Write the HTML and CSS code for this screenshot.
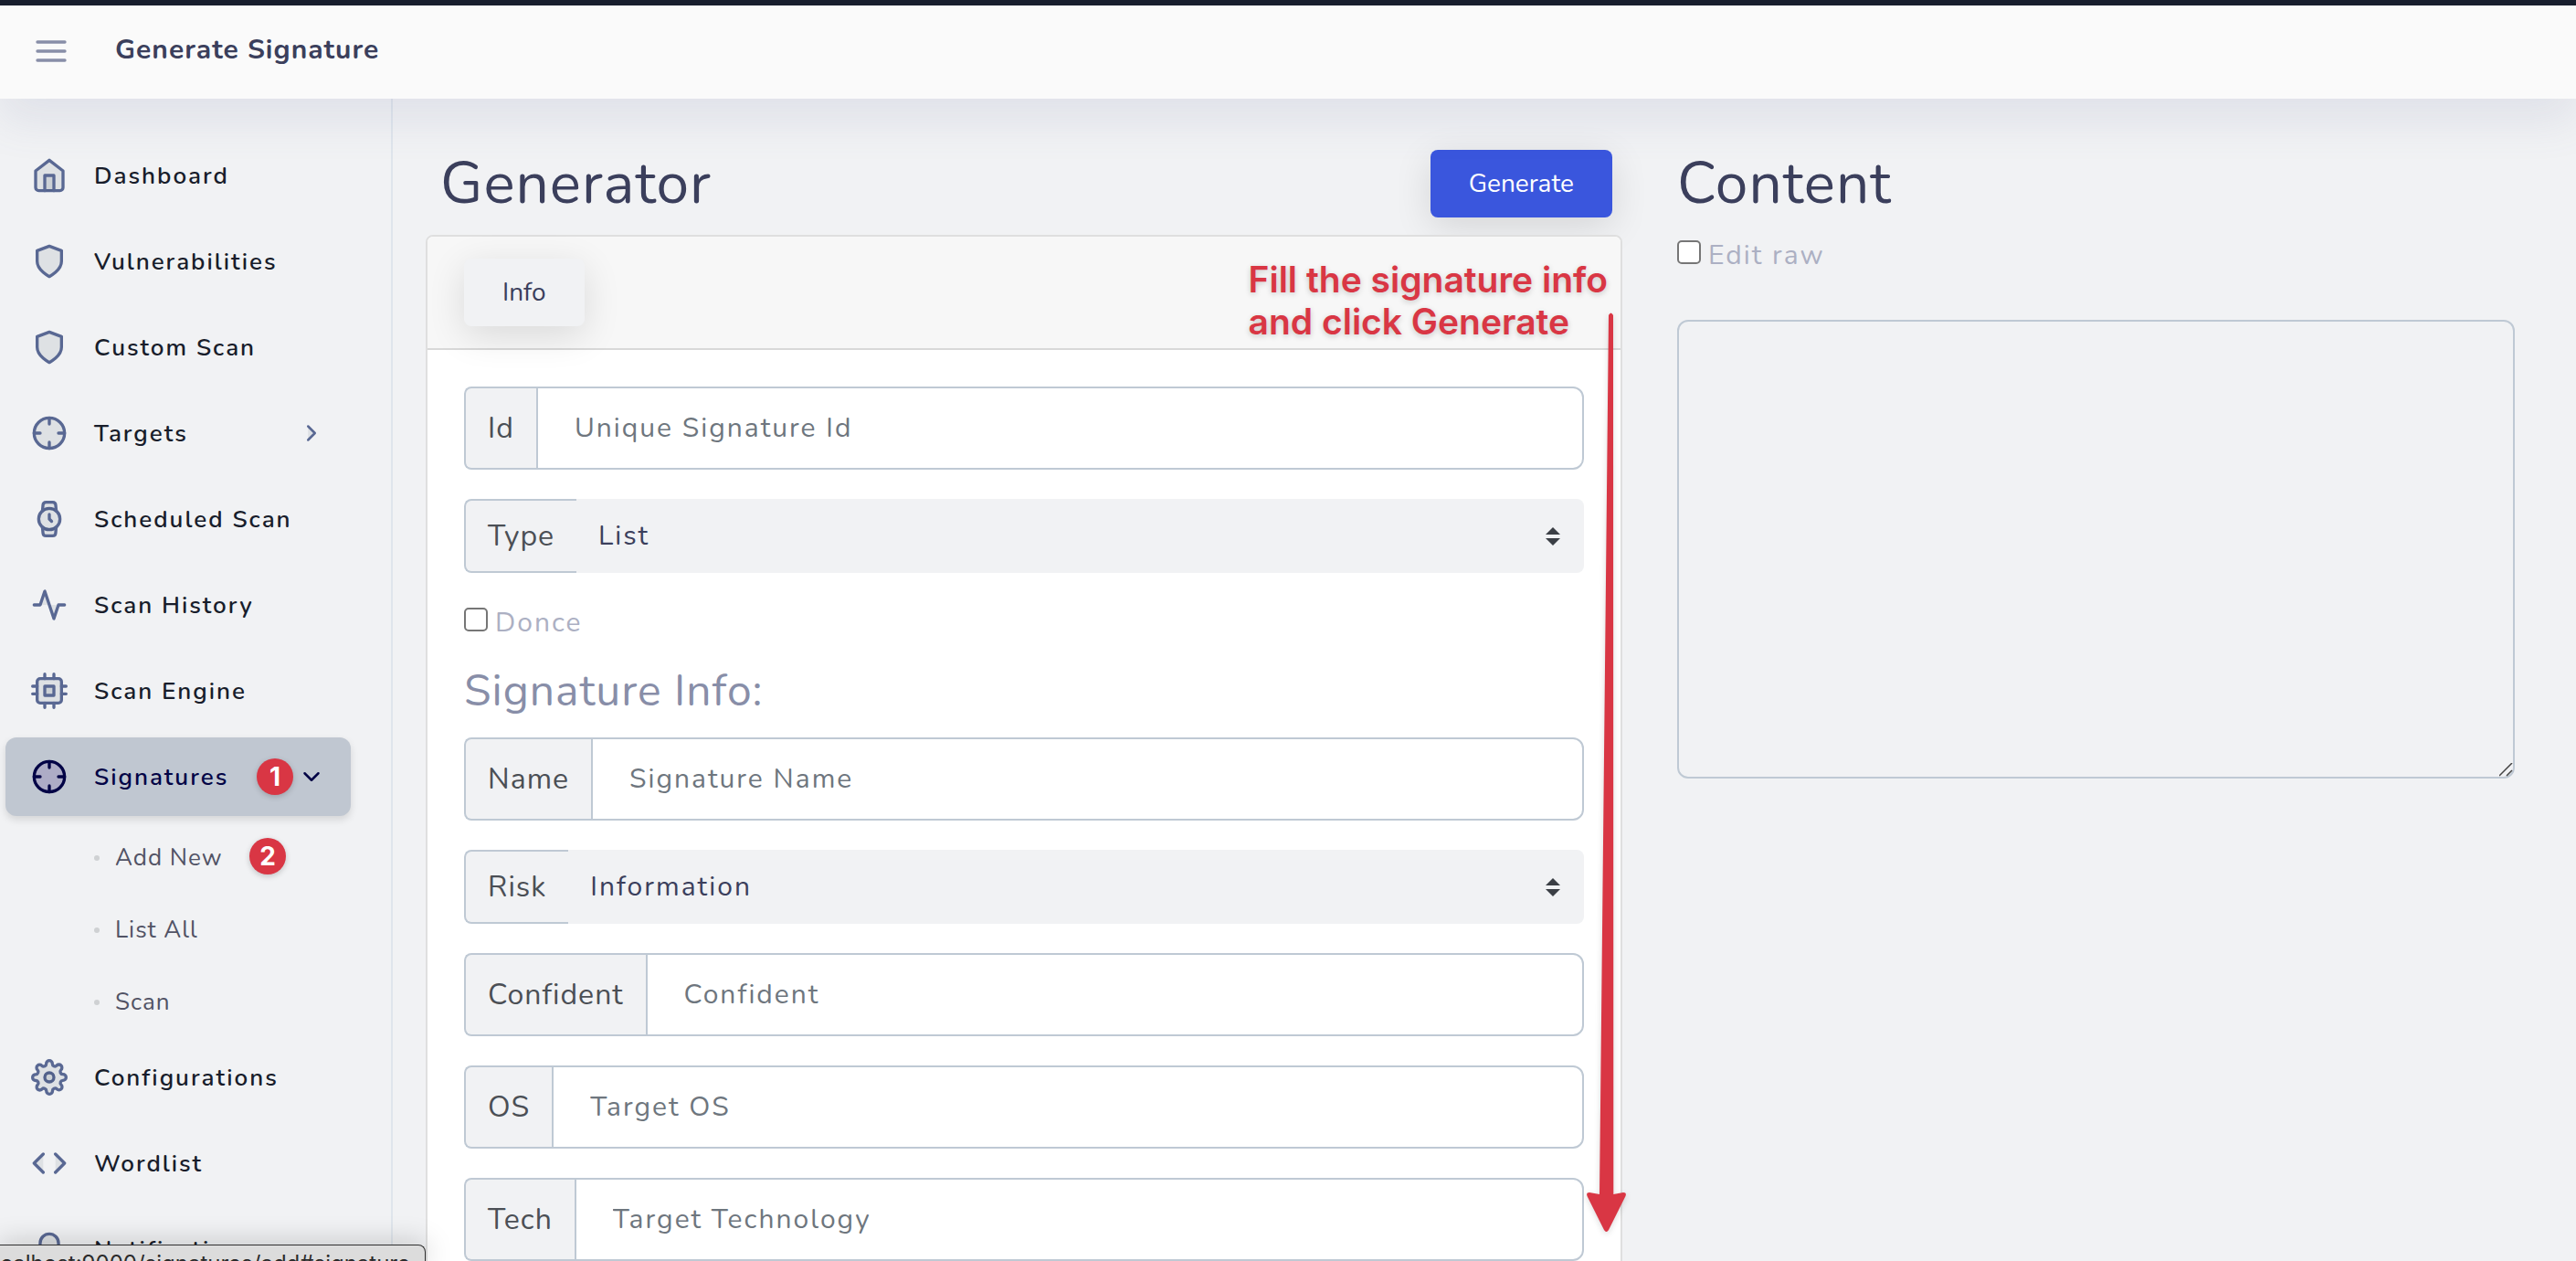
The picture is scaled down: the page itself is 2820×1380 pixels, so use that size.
FILE: index.html
```html
<!DOCTYPE html>
<html lang="en">
<head>
<meta charset="utf-8">
<title>Generate Signature</title>
<link rel="stylesheet" href="styles.css">
</head>
<body>
<svg class="sprite" aria-hidden="true">
  <symbol id="i-home" viewBox="0 0 24 24"><path d="M3 9l9-7 9 7v11a2 2 0 0 1-2 2H5a2 2 0 0 1-2-2z"/><polyline points="9 22 9 12 15 12 15 22"/></symbol>
  <symbol id="i-shield" viewBox="0 0 24 24"><path d="M12 22s8-4 8-10V5l-8-3-8 3v7c0 6 8 10 8 10z"/></symbol>
  <symbol id="i-crosshair" viewBox="0 0 24 24"><circle cx="12" cy="12" r="10"/><path d="M22 12h-4M6 12H2M12 6V2M12 22v-4"/></symbol>
  <symbol id="i-watch" viewBox="0 0 24 24"><circle cx="12" cy="12" r="7"/><polyline points="12 9 12 12 13.500 13.500"/><path d="M16.510 17.350l-.350 3.830a2 2 0 0 1-2 1.820H9.830a2 2 0 0 1-2-1.820l-.350-3.830m.010-10.700l.350-3.830A2 2 0 0 1 9.830 1h4.350a2 2 0 0 1 2 1.820l.350 3.830"/></symbol>
  <symbol id="i-activity" viewBox="0 0 24 24"><polyline points="22 12 18 12 15 21 9 3 6 12 2 12"/></symbol>
  <symbol id="i-cpu" viewBox="0 0 24 24"><rect x="4" y="4" width="16" height="16" rx="2"/><rect x="9" y="9" width="6" height="6"/><path d="M9 1v3M15 1v3M9 20v3M15 20v3M20 9h3M20 14h3M1 9h3M1 14h3"/></symbol>
  <symbol id="i-settings" viewBox="0 0 24 24"><circle cx="12" cy="12" r="3"/><path d="M19.400 15a1.650 1.650 0 0 0 .330 1.820l.060.060a2 2 0 0 1 0 2.830 2 2 0 0 1-2.830 0l-.060-.060a1.650 1.650 0 0 0-1.820-.330 1.650 1.650 0 0 0-1 1.510V21a2 2 0 0 1-2 2 2 2 0 0 1-2-2v-.090A1.650 1.650 0 0 0 9 19.400a1.650 1.650 0 0 0-1.820.330l-.060.060a2 2 0 0 1-2.830 0 2 2 0 0 1 0-2.830l.060-.060a1.650 1.650 0 0 0 .330-1.820 1.650 1.650 0 0 0-1.510-1H3a2 2 0 0 1-2-2 2 2 0 0 1 2-2h.090A1.650 1.650 0 0 0 4.600 9a1.650 1.650 0 0 0-.330-1.820l-.060-.060a2 2 0 0 1 0-2.830 2 2 0 0 1 2.830 0l.060.060a1.650 1.650 0 0 0 1.820.330H9a1.650 1.650 0 0 0 1-1.510V3a2 2 0 0 1 2-2 2 2 0 0 1 2 2v.090a1.650 1.650 0 0 0 1 1.510 1.650 1.650 0 0 0 1.820-.330l.060-.060a2 2 0 0 1 2.830 0 2 2 0 0 1 0 2.830l-.060.060a1.650 1.650 0 0 0-.330 1.820V9a1.650 1.650 0 0 0 1.510 1H21a2 2 0 0 1 2 2 2 2 0 0 1-2 2h-.090a1.650 1.650 0 0 0-1.510 1z"/></symbol>
  <symbol id="i-code" viewBox="0 0 24 24"><polyline points="16 18 22 12 16 6"/><polyline points="8 6 2 12 8 18"/></symbol>
  <symbol id="i-bell" viewBox="0 0 24 24"><path d="M18 8A6 6 0 0 0 6 8c0 7-3 9-3 9h18s-3-2-3-9"/><path d="M13.730 21a2 2 0 0 1-3.460 0"/></symbol>
  <symbol id="i-right" viewBox="0 0 24 24"><polyline points="9 18 15 12 9 6"/></symbol>
  <symbol id="i-down" viewBox="0 0 24 24"><polyline points="6 9 12 15 18 9"/></symbol>
  <symbol id="i-menu" viewBox="0 0 24 24"><path d="M3 12h18M3 6h18M3 18h18"/></symbol>
</svg>
<div class="page">
  <header class="topbar">
    <button class="menu-toggle" type="button" aria-label="Toggle menu"><svg class="icon"><use href="#i-menu"/></svg></button>
    <h3 class="topbar-title">Generate Signature</h3>
  </header>
  <div class="layout">
    <nav class="sidebar">
      <ul class="menu">
        <li><a class="menu-link" href="#dashboard"><svg class="icon"><use href="#i-home"/></svg><span>Dashboard</span></a></li>
        <li><a class="menu-link" href="#vulnerabilities"><svg class="icon"><use href="#i-shield"/></svg><span>Vulnerabilities</span></a></li>
        <li><a class="menu-link" href="#custom"><svg class="icon"><use href="#i-shield"/></svg><span>Custom Scan</span></a></li>
        <li><a class="menu-link" href="#targets"><svg class="icon"><use href="#i-crosshair"/></svg><span>Targets</span><svg class="icon chevron"><use href="#i-right"/></svg></a></li>
        <li><a class="menu-link" href="#scheduled"><svg class="icon"><use href="#i-watch"/></svg><span>Scheduled Scan</span></a></li>
        <li><a class="menu-link" href="#history"><svg class="icon"><use href="#i-activity"/></svg><span>Scan History</span></a></li>
        <li><a class="menu-link" href="#engine"><svg class="icon"><use href="#i-cpu"/></svg><span>Scan Engine</span></a></li>
        <li class="menu-group">
          <a class="menu-link active" href="#signatures"><svg class="icon"><use href="#i-crosshair"/></svg><span>Signatures</span><svg class="icon chevron"><use href="#i-down"/></svg></a>
          <b class="step step-one">1</b>
          <ul class="submenu">
            <li><a href="#signature-add">Add New</a><b class="step step-two">2</b></li>
            <li><a href="#signature-list">List All</a></li>
            <li><a href="#signature-scan">Scan</a></li>
          </ul>
        </li>
        <li><a class="menu-link" href="#configurations"><svg class="icon"><use href="#i-settings"/></svg><span>Configurations</span></a></li>
        <li><a class="menu-link" href="#wordlist"><svg class="icon"><use href="#i-code"/></svg><span>Wordlist</span></a></li>
        <li><a class="menu-link" href="#notification"><svg class="icon"><use href="#i-bell"/></svg><span>Notification</span></a></li>
      </ul>
    </nav>
    <main class="main">
      <section class="generator">
        <div class="heading-row">
          <h1>Generator</h1>
          <button class="btn btn-primary" type="button">Generate</button>
        </div>
        <div class="card">
          <div class="card-header"><button class="btn btn-light" type="button">Info</button></div>
          <form class="card-body">
            <div class="field"><label for="sid">Id</label><input id="sid" type="text" placeholder="Unique Signature Id"></div>
            <div class="field field-select"><label for="type">Type</label><select id="type"><option>List</option></select></div>
            <div class="check"><input id="donce" type="checkbox"><label for="donce">Donce</label></div>
            <h3 class="form-title">Signature Info:</h3>
            <div class="field"><label for="name">Name</label><input id="name" type="text" placeholder="Signature Name"></div>
            <div class="field field-select"><label for="risk">Risk</label><select id="risk"><option>Information</option></select></div>
            <div class="field"><label for="confident">Confident</label><input id="confident" type="text" placeholder="Confident"></div>
            <div class="field"><label for="os">OS</label><input id="os" type="text" placeholder="Target OS"></div>
            <div class="field"><label for="tech">Tech</label><input id="tech" type="text" placeholder="Target Technology"></div>
          </form>
          <p class="note">Fill the signature info<br>and click Generate</p>
          <svg class="arrow" viewBox="0 0 48 1012" aria-hidden="true"><path d="M27 4q2.500-5 5 0L32.300 966 43 964q4 0 2.500 4L27 1005q-2.500 4-5 0L3.500 968Q2 964 6 964L17 966z"/></svg>
        </div>
      </section>
      <section class="content">
        <div class="heading-row"><h1>Content</h1></div>
        <div class="check"><input id="raw" type="checkbox"><label for="raw">Edit raw</label></div>
        <textarea class="editor" aria-label="Content"></textarea>
      </section>
    </main>
  </div>
  <div class="status">localhost:9000/signatures/add#signature</div>
</div>
</body>
</html>
```
FILE: styles.css
```css
* { box-sizing: border-box; }

body {
  margin: 0;
  background: #f1f2f4;
  color: #3b3f5c;
  font-family: Nunito, "Open Sans", sans-serif;
  font-size: 30px;
}

h1, h3, p, ul { margin: 0; padding: 0; }
ul { list-style: none; }
a { color: inherit; text-decoration: none; }
button, input, select, textarea { font: inherit; color: inherit; }

.sprite { position: absolute; width: 0; height: 0; }

.page {
  position: relative;
  display: flex;
  flex-direction: column;
  height: 100vh;
  overflow: hidden;
}

.icon {
  flex: none;
  width: 40px;
  height: 40px;
  fill: rgba(0, 23, 55, 0.08);
  stroke: currentColor;
  stroke-width: 2;
  stroke-linecap: round;
  stroke-linejoin: round;
}

/* Top bar */
.topbar {
  position: relative;
  z-index: 2;
  flex: none;
  display: flex;
  align-items: center;
  gap: 50px;
  height: 108px;
  padding: 0 36px 2px;
  border-top: 6px solid #181e2d;
  background: #fafafa;
  box-shadow: 0 24px 48px rgba(100, 110, 155, 0.12);
}
.menu-toggle {
  display: flex;
  padding: 0;
  border: 0;
  background: none;
  color: #888ea8;
}
.topbar-title {
  margin-bottom: 4px;
  font-size: 30px;
  font-weight: 700;
  letter-spacing: 1px;
}

.layout {
  flex: 1;
  display: flex;
  min-height: 0;
}

/* Sidebar */
.sidebar {
  flex: none;
  width: 430px;
  padding: 41px 44px 0 6px;
  border-right: 2px solid #dfe5ec;
}
.menu > li { margin-bottom: 8px; }
.menu > .menu-group { position: relative; margin-bottom: 0; }
.menu-link {
  display: flex;
  align-items: center;
  height: 86px;
  padding: 0 28px;
  border-radius: 12px;
  color: #596893;
}
.menu-link span {
  margin-left: 29px;
  color: #181d2b;
  font-size: 26px;
  font-weight: 600;
  letter-spacing: 2px;
}
.menu-link.active {
  background: #c0c7d1;
  color: #030446;
  box-shadow: 0 4px 8px rgba(0, 0, 0, 0.12);
}
.menu-link.active .icon { fill: rgba(70, 20, 140, 0.15); }
.menu-link.active .chevron { fill: none; }
.menu-link.active span { color: #030446; }
.menu-link .chevron {
  width: 30px;
  height: 30px;
  margin-left: auto;
}
.submenu { padding: 6px 0 0 97px; }
.submenu li {
  position: relative;
  display: flex;
  align-items: center;
  height: 79px;
}
.submenu li::before {
  content: "";
  width: 6px;
  height: 6px;
  margin-right: 17px;
  border-radius: 50%;
  background: #cfd1d3;
}
.submenu a {
  color: #515365;
  font-size: 26px;
  letter-spacing: 1px;
}

/* Numbered walkthrough markers laid over the menu */
.step {
  position: absolute;
  display: flex;
  align-items: center;
  justify-content: center;
  width: 40px;
  height: 40px;
  border-radius: 50%;
  background: #d93644;
  box-shadow: 0 2px 6px rgba(0, 0, 0, 0.2);
  color: #fff;
  font: 700 28px/40px Inter, sans-serif;
}
.step-one { top: 23px; left: 275px; }
.step-two { top: 18px; left: 170px; }

/* Main area */
.main {
  flex: 1;
  display: grid;
  grid-template-columns: 10fr 7fr;
  gap: 60px;
  min-width: 0;
  padding: 56px 67px 0 36px;
}
.generator, .content { min-width: 0; }
.heading-row {
  display: flex;
  align-items: center;
  justify-content: space-between;
  height: 74px;
}
.generator .heading-row {
  margin-bottom: 19px;
  padding: 0 11px 0 16px;
}
h1 {
  font-size: 64px;
  font-weight: 400;
  line-height: 74px;
  letter-spacing: 1px;
}

.btn {
  height: 74px;
  border: 0;
  border-radius: 8px;
  font-size: 28px;
  box-shadow: 0 10px 40px rgba(0, 0, 0, 0.12);
}
.btn-primary {
  padding: 0 42px;
  background: #3a56dd;
  color: #fff;
}
.btn-light {
  padding: 0 42px;
  background: #f1f2f4;
  color: #3b3f5c;
}

.card {
  position: relative;
  border: 2px solid #dfdfdf;
  border-radius: 8px;
  background: #fff;
}
.card-header {
  display: flex;
  padding: 24px 40px;
  border-bottom: 2px solid #d8d8d8;
  border-radius: 6px 6px 0 0;
  background: #f7f7f7;
}
.card-body {
  display: flex;
  flex-direction: column;
  gap: 32px;
  padding: 40px;
}

.field {
  display: flex;
  height: 91px;
}
.field label {
  display: flex;
  align-items: center;
  padding: 0 24px;
  border: 2px solid #bfc9d4;
  border-right: 0;
  border-radius: 8px 0 0 8px;
  background: #f1f2f4;
  color: #4b4f55;
  font-size: 32px;
  letter-spacing: 1px;
}
.field input {
  flex: 1;
  min-width: 0;
  padding: 0 40px;
  border: 2px solid #bfc9d4;
  border-radius: 0 12px 12px 0;
  background: #fff;
  letter-spacing: 2px;
}
.field input::placeholder { color: #6e767e; opacity: 1; }
.field-select { height: 81px; }
.field select {
  flex: 1;
  min-width: 0;
  padding: 0 60px 0 24px;
  border: 0;
  border-radius: 0 8px 8px 0;
  appearance: none;
  background: #f1f2f4 url("data:image/svg+xml,%3Csvg xmlns='http://www.w3.org/2000/svg' viewBox='0 0 4 5'%3E%3Cpath fill='%233b3f45' d='M2 0L0 2h4zm0 5L0 3h4z'/%3E%3C/svg%3E") no-repeat right 26px center / 16px 20px;
  letter-spacing: 2px;
}

.check {
  display: flex;
  align-items: center;
  gap: 8px;
  height: 42px;
  color: #acb0c3;
  letter-spacing: 2px;
}
.check input {
  width: 26px;
  height: 26px;
  margin: 0 0 4px;
  border: 2px solid #767676;
  border-radius: 5px;
  appearance: none;
  background: #fff;
}
.check label { margin-top: 2px; }
.form-title {
  margin: -6px 0 -10px;
  color: #888ea8;
  font-size: 48px;
  font-weight: 400;
  line-height: 58px;
  letter-spacing: 1px;
}

.content .check { margin: 19px 0 51px; }
.editor {
  display: block;
  width: 100%;
  height: 502px;
  padding: 24px;
  border: 2px solid #bfc9d4;
  border-radius: 12px;
  background: #f1f2f4;
  resize: both;
}
.editor::-webkit-resizer {
  background: url("data:image/svg+xml,%3Csvg xmlns='http://www.w3.org/2000/svg' viewBox='0 0 15 15'%3E%3Cpath stroke='%23444' stroke-width='1.500' d='M0 14L14 0M8 14L14 8'/%3E%3C/svg%3E") no-repeat center / 100% 100%;
}

/* Walkthrough note and arrow laid over the form */
.note {
  position: absolute;
  top: 24px;
  right: 14px;
  color: #d93644;
  font: 600 39px/46px Inter, sans-serif;
  text-shadow: 0 2px 6px rgba(0, 0, 0, 0.2);
}
.arrow {
  position: absolute;
  top: 82px;
  right: -8px;
  width: 48px;
  height: 1012px;
  fill: #d93644;
  filter: drop-shadow(0 2px 3px rgba(0, 0, 0, 0.15));
}

/* Link address shown at the window's lower edge */
.status {
  position: absolute;
  z-index: 3;
  left: 0;
  bottom: 0;
  display: flex;
  justify-content: flex-end;
  width: 466px;
  height: 18px;
  padding: 4px 16px 0 0;
  overflow: hidden;
  border: solid #303030;
  border-width: 1px 1px 0 0;
  border-radius: 0 8px 0 0;
  background: #dcdcdc;
  box-shadow: 0 0 30px rgba(0, 0, 0, 0.25);
  color: #2b2b2b;
  font: 24px/32px Inter, sans-serif;
  white-space: nowrap;
}
```
